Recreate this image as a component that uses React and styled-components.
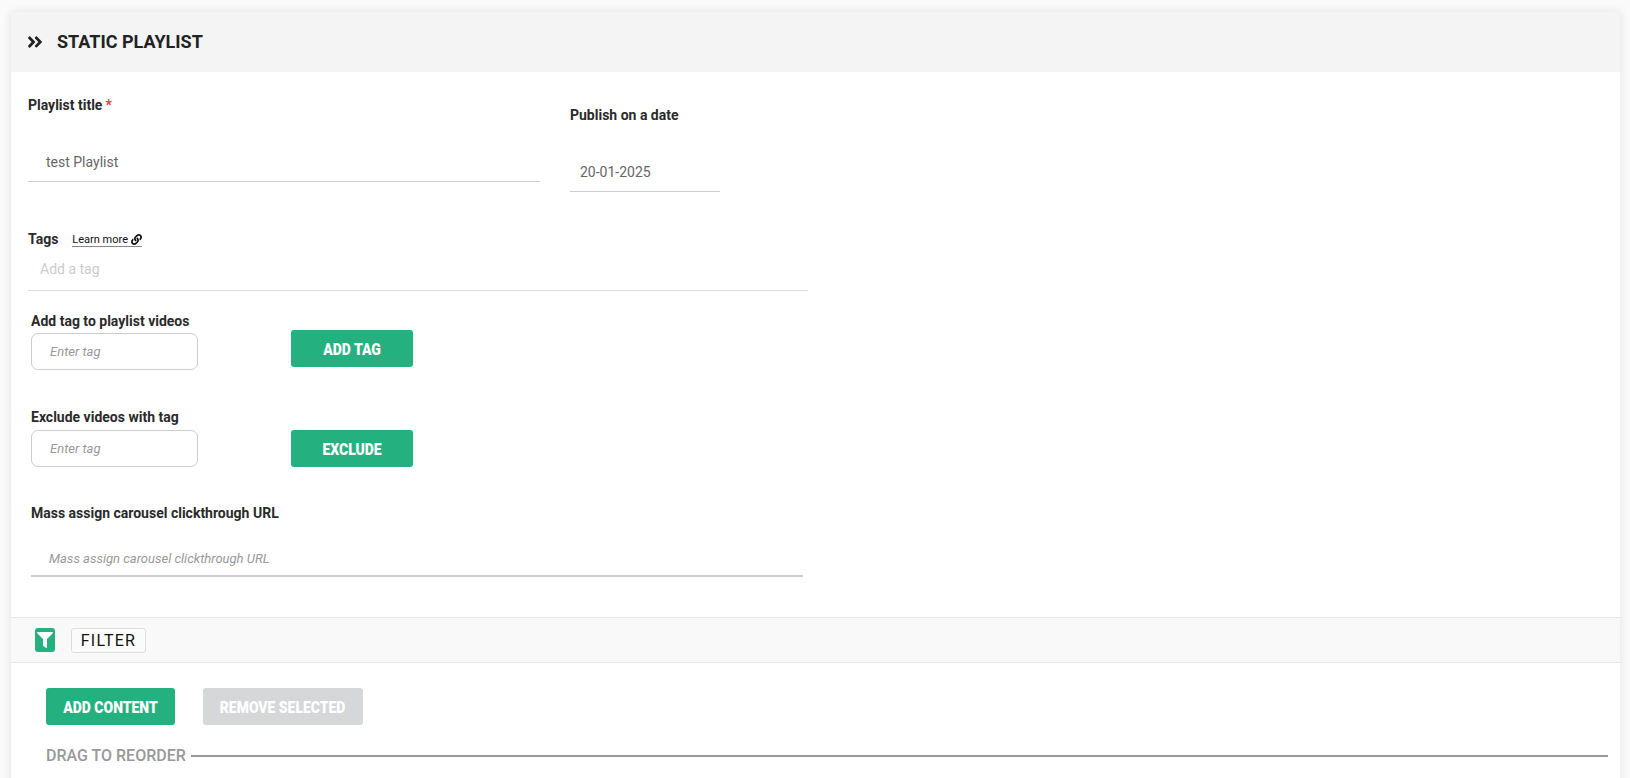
import React from 'react';
import styled, { createGlobalStyle } from 'styled-components';
import { FaAngleDoubleRight, FaFilter, FaLink } from 'react-icons/fa';

const GlobalStyle = createGlobalStyle`
  html, body {
    margin: 0;
    height: 100%;
    overflow: hidden;
    background: #fafafa;
    font-family: Roboto, "Liberation Sans", sans-serif;
    color: #222;
  }
`;

const Page = styled.div`
  height: 778px;
  overflow: hidden;
  padding: 12px 10px 0 11px;
  box-sizing: border-box;
`;

const Card = styled.section`
  background: #fff;
  border-radius: 4px 4px 0 0;
  box-shadow: 0 0 10px rgba(0, 0, 0, 0.1);
  height: 800px;
`;

const Header = styled.header`
  height: 60px;
  background: #f4f4f4;
  display: flex;
  align-items: center;
  padding: 0 0 1px 15px;
  box-sizing: border-box;
  gap: 13px;
  border-radius: 4px 4px 0 0;
`;

const Title = styled.h1`
  margin: 0;
  font-size: 18px;
  font-weight: 700;
  color: #222;
`;

const Form = styled.div`
  padding: 0 0 0 17px;
  height: 545px;
  box-sizing: border-box;
`;

const TopRow = styled.div`
  display: flex;
  gap: 30px;
`;

const TitleField = styled.div`
  width: 512px;
  padding-top: 25px;
`;

const DateField = styled.div`
  width: 150px;
  padding-top: 35px;
`;

const Label = styled.label`
  display: block;
  font-size: 14px;
  font-weight: 700;
  line-height: 16px;
  color: #2a2a2a;
`;

const Required = styled.span`
  color: #f33;
  margin-left: 3px;
`;

const LineInput = styled.div`
  margin-top: 24px;
  display: flex;
  align-items: center;
  padding-top: 6px;
  height: 38px;
  padding-left: ${p => p.$indent}px;
  border-bottom: 1px solid #ccc;
  font-size: 14px;
  color: #666;
`;

const TagsRow = styled.div`
  display: flex;
  align-items: flex-end;
  margin-top: 39px;
`;

const LearnMore = styled.a`
  display: inline-flex;
  align-items: center;
  gap: 3px;
  margin-left: 14px;
  font-size: 11px;
  line-height: 13px;
  color: #111;
  border-bottom: 1px solid #888;
`;

const TagsInput = styled.div`
  width: 780px;
  height: 42px;
  margin-top: 2px;
  padding-bottom: 2px;
  box-sizing: border-box;
  display: flex;
  align-items: center;
  padding-left: 12px;
  border-bottom: 1px solid #ddd;
  font-size: 14px;
  color: #ccc;
`;

const Indented = styled.div`
  padding-left: 3px;
`;

const TagGroup = styled.div`
  margin-top: ${p => p.$top}px;
`;

const TagRow = styled.div`
  display: flex;
  align-items: flex-start;
  gap: 93px;
`;

const TagInput = styled.div`
  width: 167px;
  height: 37px;
  margin-top: ${p => p.$top}px;
  box-sizing: border-box;
  display: flex;
  align-items: center;
  padding-left: 18px;
  border: 1px solid #ccc;
  border-radius: 7px;
  font-size: 13px;
  font-style: italic;
  color: #999;
`;

const Button = styled.button`
  height: 37px;
  width: ${p => p.$width}px;
  margin-top: ${p => p.$top || 0}px;
  padding: 0;
  border: none;
  border-radius: 3px;
  background: ${p => (p.disabled ? '#d6d7d9' : '#25b17f')};
  color: #fff;
  font-family: Roboto, sans-serif;
  font-size: 17px;
  font-weight: 900;
  white-space: nowrap;
`;

// the original buttons use a condensed face, Roboto squeezed to the same width
const ButtonLabel = styled.span`
  display: inline-block;
  transform: scaleX(0.82);
`;

const MassInput = styled.div`
  width: 772px;
  height: 50px;
  margin-top: 6px;
  padding-top: 14px;
  box-sizing: border-box;
  display: flex;
  align-items: center;
  padding-left: 18px;
  border-bottom: 2px solid #ccc;
  font-size: 13px;
  font-style: italic;
  color: #999;
`;

const FilterBar = styled.div`
  height: 46px;
  box-sizing: border-box;
  background: #f9f9f9;
  border-top: 1px solid #e6e6e6;
  border-bottom: 1px solid #e6e6e6;
  display: flex;
  align-items: center;
  padding-left: 24px;
  gap: 16px;
`;

const FilterIcon = styled.span`
  width: 20px;
  height: 24px;
  border-radius: 3px;
  background: #25b17f;
  color: #fff;
  display: flex;
  align-items: center;
  justify-content: center;
`;

const FilterButton = styled.span`
  width: 75px;
  height: 25px;
  box-sizing: border-box;
  display: flex;
  align-items: center;
  justify-content: center;
  background: #fbfbfb;
  border: 1px solid #ddd;
  border-radius: 3px;
  font-size: 16px;
  letter-spacing: 1.2px;
  color: #111;
`;

const Content = styled.div`
  padding: 25px 12px 0 35px;
`;

const Actions = styled.div`
  display: flex;
  gap: 28px;
`;

const ReorderRow = styled.div`
  display: flex;
  align-items: center;
  gap: 5px;
  margin-top: 21px;
  font-size: 16px;
  font-weight: 500;
  color: #999;
`;

const ReorderLine = styled.span`
  flex: 1;
  height: 2px;
  background: #999;
`;

export default function App() {
  return (
    <>
      <GlobalStyle />
      <Page>
        <Card>
          <Header>
            <FaAngleDoubleRight size={18} color="#222" />
            <Title>STATIC PLAYLIST</Title>
          </Header>
          <Form>
            <TopRow>
              <TitleField>
                <Label>Playlist title<Required>*</Required></Label>
                <LineInput $indent={18}>test Playlist</LineInput>
              </TitleField>
              <DateField>
                <Label>Publish on a date</Label>
                <LineInput $indent={10}>20-01-2025</LineInput>
              </DateField>
            </TopRow>
            <TagsRow>
              <Label>Tags</Label>
              <LearnMore>Learn more <FaLink size={11} /></LearnMore>
            </TagsRow>
            <TagsInput>Add a tag</TagsInput>
            <Indented>
              <TagGroup $top={22}>
                <Label>Add tag to playlist videos</Label>
                <TagRow>
                  <TagInput $top={4}>Enter tag</TagInput>
                  <Button $width={122} $top={1}><ButtonLabel>ADD TAG</ButtonLabel></Button>
                </TagRow>
              </TagGroup>
              <TagGroup $top={39}>
                <Label>Exclude videos with tag</Label>
                <TagRow>
                  <TagInput $top={5}>Enter tag</TagInput>
                  <Button $width={122} $top={5}><ButtonLabel>EXCLUDE</ButtonLabel></Button>
                </TagRow>
              </TagGroup>
              <TagGroup $top={38}>
                <Label>Mass assign carousel clickthrough URL</Label>
                <MassInput>Mass assign carousel clickthrough URL</MassInput>
              </TagGroup>
            </Indented>
          </Form>
          <FilterBar>
            <FilterIcon><FaFilter size={16} /></FilterIcon>
            <FilterButton>FILTER</FilterButton>
          </FilterBar>
          <Content>
            <Actions>
              <Button $width={129}><ButtonLabel>ADD CONTENT</ButtonLabel></Button>
              <Button $width={160} disabled><ButtonLabel>REMOVE SELECTED</ButtonLabel></Button>
            </Actions>
            <ReorderRow>
              DRAG TO REORDER
              <ReorderLine />
            </ReorderRow>
          </Content>
        </Card>
      </Page>
    </>
  );
}
